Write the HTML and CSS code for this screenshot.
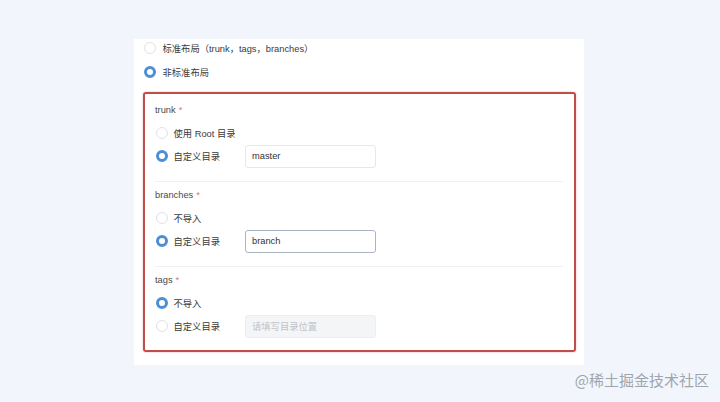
FILE: index.html
```html
<!DOCTYPE html>
<html lang="zh">
<head>
<meta charset="utf-8">
<link rel="stylesheet" href="styles.css">
</head>
<body>
<div class="card">
  <div class="top-row"><span class="radio"></span><span>标准布局（trunk，tags，branches）</span></div>
  <div class="top-row"><span class="radio checked"></span><span>非标准布局</span></div>
  <div class="box">
    <div class="section first">
      <div class="label">trunk <span class="req">*</span></div>
      <div class="row"><div class="opt"><span class="radio"></span><span>使用 Root 目录</span></div></div>
      <div class="row"><div class="opt"><span class="radio checked"></span><span>自定义目录</span></div><div class="input">master</div></div>
    </div>
    <div class="section">
      <div class="label">branches <span class="req">*</span></div>
      <div class="row"><div class="opt"><span class="radio"></span><span>不导入</span></div></div>
      <div class="row"><div class="opt"><span class="radio checked"></span><span>自定义目录</span></div><div class="input focus">branch</div></div>
    </div>
    <div class="section last">
      <div class="label">tags <span class="req">*</span></div>
      <div class="row"><div class="opt"><span class="radio checked"></span><span>不导入</span></div></div>
      <div class="row"><div class="opt"><span class="radio"></span><span>自定义目录</span></div><div class="input disabled">请填写目录位置</div></div>
    </div>
  </div>
</div>
<div class="watermark">@稀土掘金技术社区</div>
</body>
</html>
```

FILE: styles.css
```css
html, body {
  margin: 0;
  padding: 0;
}
body {
  background: #f2f6fc;
  width: 720px;
  height: 402px;
  overflow: hidden;
  position: relative;
  font-family: "Liberation Sans", "Noto Sans CJK SC", sans-serif;
  font-size: 9.3px;
  color: #3a3a3a;
}
.card {
  background: #fff;
  margin: 39px 0 0 134px;
  width: 450px;
  height: 326px;
  box-sizing: border-box;
  padding: 0 8px 0 9px;
}
.top-row {
  display: flex;
  align-items: center;
  height: 18px;
  gap: 7px;
  padding-left: 0.5px;
}
.top-row + .top-row {
  margin-top: 6px;
}
.radio {
  width: 12px;
  height: 12px;
  box-sizing: border-box;
  border: 1px solid #e0e2e6;
  border-radius: 50%;
  background: #fff;
  flex: none;
}
.radio.checked {
  border: 3.5px solid #4d8fd4;
}
.box {
  margin-top: 11px;
  border: 2px solid #bf4d4a;
  border-radius: 3px;
  box-shadow: 0 0 2px rgba(191, 77, 74, 0.45);
  padding-top: 3px;
}
.section {
  margin: 0 11px 0 10px;
  padding: 1px 0 13px;
  border-top: 1px solid #eef0f2;
}
.section.first {
  border-top: none;
  padding-top: 1px;
}
.section.last {
  padding-bottom: 12px;
}
.label {
  height: 23px;
  display: flex;
  align-items: center;
  color: #4a4a4a;
}
.req {
  color: #e07a78;
  margin-left: 3px;
}
.row {
  height: 23px;
  display: flex;
  align-items: center;
}
.row + .row {
  height: 24px;
}
.opt {
  width: 90px;
  display: flex;
  align-items: center;
  gap: 6px;
  padding-left: 0.5px;
  box-sizing: border-box;
}
.input {
  width: 131px;
  height: 23px;
  box-sizing: border-box;
  border: 1px solid #e6e8eb;
  border-radius: 3px;
  padding-left: 6px;
  display: flex;
  align-items: center;
  color: #333;
}
.input.focus {
  border-color: #a9b5c4;
}
.input.disabled {
  background: #f4f5f7;
  border-color: #eceef1;
  color: #c0c3c8;
}
.watermark {
  position: absolute;
  right: 11px;
  bottom: 12px;
  font-size: 15px;
  color: #a0a5ad;
  font-family: "Noto Sans CJK SC", sans-serif;
}
```
